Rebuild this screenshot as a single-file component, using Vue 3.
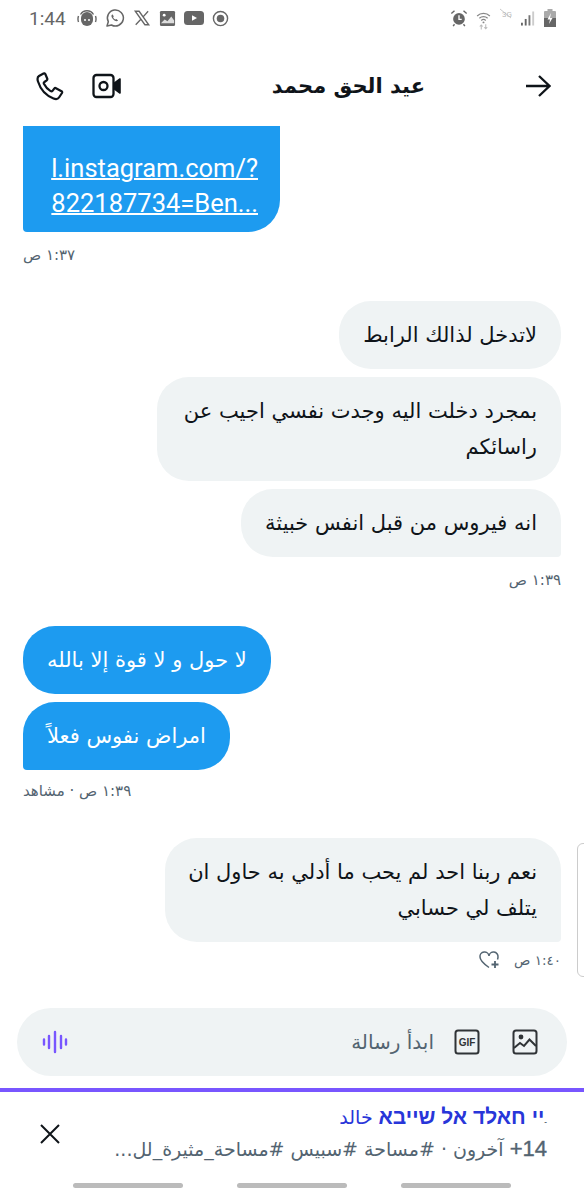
<script setup>
</script>

<template>
  <div class="phone">
    <div class="status">
      <div class="status-left">
        <span class="clock">1:44</span>
        <svg viewBox="0 0 20 20" width="20" height="20"><path d="M4 10a6 6 0 0 1 12 0v2a6 6 0 0 1-12 0z" fill="#666"/><path d="M3.500 6.500a7.500 7.500 0 0 1 13 0M1.500 14a9 9 0 0 1 0-6M18.500 14a9 9 0 0 0 0-6" fill="none" stroke="#666" stroke-width="1.400"/><circle cx="8" cy="12" r="1" fill="#fff"/><circle cx="12" cy="12" r="1" fill="#fff"/></svg>
        <svg viewBox="0 0 20 20" width="20" height="20"><path d="M2 18l1.300-4.300A8 8 0 1 1 6.500 17z" fill="none" stroke="#666" stroke-width="1.500" stroke-linejoin="round"/><path d="M7.300 6.300c-1.500 1-1 3 .8 5s3.800 2.700 5 1.200l-1.700-1.500-1 .6c-1-.5-1.800-1.300-2.300-2.400l.7-.9z" fill="#666"/></svg>
        <svg viewBox="0 0 20 20" width="18" height="18"><path d="M2.500 2.500h4.300l10.700 15h-4.300zM16.800 2.500L11 9M9 11.200l-6 6.300" fill="none" stroke="#666" stroke-width="1.500"/></svg>
        <svg viewBox="0 0 18 18" width="17" height="17"><rect x="1" y="1" width="16" height="16" rx="1.500" fill="#666"/><circle cx="5.500" cy="5.500" r="1.500" fill="#fff"/><path d="M2 14l4-4 3 2 4-5 3 4v3H2z" fill="#ddd"/></svg>
        <svg viewBox="0 0 20 16" width="20" height="16"><rect x="0" y="1" width="20" height="14" rx="3.500" fill="#666"/><path d="M8 5.300l5 2.700-5 2.700z" fill="#fff"/></svg>
        <svg viewBox="0 0 18 18" width="17" height="17"><circle cx="9" cy="9" r="7.500" fill="none" stroke="#666" stroke-width="1.500"/><circle cx="9" cy="9" r="4" fill="#666"/></svg>
      </div>
      <div class="status-right">
        <svg viewBox="0 0 20 20" width="18" height="18"><circle cx="10" cy="11" r="6.500" fill="#666"/><path d="M10 7v4.500h3" fill="none" stroke="#fff" stroke-width="1.500"/><path d="M1.500 5L5 2M18.500 5L15 2M5 17l-1.500 2M15 17l1.500 2" stroke="#666" stroke-width="1.600"/></svg>
        <svg class="wifi" viewBox="0 0 20 24" width="15" height="19"><path d="M1.500 6a12 12 0 0 1 17 0M4.500 9a8 8 0 0 1 11 0M7 12a4.500 4.500 0 0 1 6 0" fill="none" stroke="#888" stroke-width="1.600"/><circle cx="10" cy="14.500" r="1.300" fill="#888"/><path d="M7 24v-6M5 20l2-2 2 2M13 17v6M11 21l2 2 2-2" fill="none" stroke="#bbb" stroke-width="1.400"/></svg>
        <svg class="net" viewBox="0 0 14 12" width="14" height="12"><text x="3" y="9" class="net-t">3G</text><path d="M1 1l11 9" stroke="#bbb" stroke-width="0.800"/></svg>
        <svg viewBox="0 0 16 17" width="15" height="17"><rect x="0" y="13" width="2" height="3" fill="#666"/><rect x="4" y="9" width="2" height="7" fill="#666"/><rect x="8" y="5" width="2" height="11" fill="#777"/><rect x="12" y="1" width="2" height="15" fill="#ccc"/></svg>
        <svg viewBox="0 0 12 18" width="12" height="18"><rect x="3.500" y="0" width="5" height="2" fill="#aaa"/><rect x="0" y="2" width="12" height="16" rx="1" fill="#aaa"/><rect x="0" y="9" width="12" height="9" fill="#666"/><path d="M7 4L3.500 10.500H6L5 15l3.500-6H6z" fill="#fff"/></svg>
      </div>
    </div>

    <header class="head">
      <div class="head-actions">
        <svg viewBox="0 0 30 30" width="30" height="30"><path d="M8.500 2.500L4 5c-1.500 1-1.800 3-1 5.500 2.500 8 8 14 15.500 17 2.500 1 4.500.5 5.500-1l3-4.500c.4-.7.200-1.400-.5-1.800l-5.500-3c-.7-.4-1.300-.2-1.800.4l-1.700 2.200c-.5.6-1.200.7-1.900.3-2.900-1.700-5.200-4.300-6.700-7.300-.3-.7-.1-1.400.5-1.800l2.300-1.700c.6-.5.8-1.100.5-1.800L10.300 3c-.4-.7-1.100-.9-1.800-.5z" fill="none" stroke="#0f1419" stroke-width="2.200" stroke-linejoin="round"/></svg>
        <svg viewBox="0 0 30 26" width="30" height="26"><rect x="1.500" y="2" width="20" height="22" rx="3" fill="none" stroke="#0f1419" stroke-width="2.300"/><circle cx="11.500" cy="13" r="4" fill="none" stroke="#0f1419" stroke-width="2.300"/><path d="M22 10.500l6-4.500v14l-6-4.500z" fill="#0f1419" stroke="#0f1419" stroke-width="1.600" stroke-linejoin="round"/></svg>
      </div>
      <h1 class="title">عيد الحق محمد</h1>
      <svg class="back" viewBox="0 0 26 24" width="26" height="24"><path d="M1 12h23M14 2l10.500 10L14 22" fill="none" stroke="#0f1419" stroke-width="2.300"/></svg>
    </header>

    <main class="thread">
      <div class="bubble blue link-bubble">
        <a class="link">l.instagram.com/?</a>
        <a class="link">822187734=Ben...</a>
      </div>
      <div class="time left">١:٣٧ ص</div>

      <div class="group mine">
        <div class="bubble grey">لاتدخل لذالك الرابط</div>
        <div class="bubble grey wide">بمجرد دخلت اليه وجدت نفسي اجيب عن راسائكم</div>
        <div class="bubble grey last">انه فيروس من قبل انفس خبيثة</div>
      </div>
      <div class="time right">١:٣٩ ص</div>

      <div class="group theirs">
        <div class="bubble blue">لا حول و لا قوة إلا بالله</div>
        <div class="bubble blue tail">امراض نفوس فعلاً</div>
      </div>
      <div class="time left seen">١:٣٩ ص · مشاهد</div>

      <div class="group mine">
        <div class="bubble grey last wide2">نعم ربنا احد لم يحب ما أدلي به حاول ان يتلف لي حسابي</div>
      </div>
      <div class="react">
        <span>١:٤٠ ص</span>
        <svg viewBox="0 0 24 20" width="24" height="20"><path d="M11 17.500C6 14 2 11 2 7a4.500 4.500 0 0 1 9-1 4.500 4.500 0 0 1 9 1c0 1-.2 1.700-.5 2.500" fill="none" stroke="#536471" stroke-width="1.500"/><path d="M17 11v7M13.500 14.500h7" stroke="#536471" stroke-width="1.800"/></svg>
      </div>
    </main>

    <div class="composer">
      <div class="box">
        <svg viewBox="0 0 26 26" width="26" height="26"><path d="M2 10.500v5M7 7v12M13 3v20M19 7v12M24 10.500v5" stroke="#7856ff" stroke-width="2.400" stroke-linecap="round"/></svg>
        <span class="placeholder">ابدأ رسالة</span>
        <svg class="gif" viewBox="0 0 26 26" width="26" height="26"><rect x="1.500" y="1.500" width="23" height="23" rx="2.500" fill="none" stroke="#2f3336" stroke-width="2"/><text x="13" y="17" text-anchor="middle" class="gif-t">GIF</text></svg>
        <svg viewBox="0 0 26 26" width="26" height="26"><rect x="1.500" y="1.500" width="23" height="23" rx="2.500" fill="none" stroke="#2f3336" stroke-width="2"/><circle cx="9" cy="8" r="2.400" fill="#2f3336"/><path d="M2 19l6-5 4 3 5.500-6.500L24 17" fill="none" stroke="#2f3336" stroke-width="2"/></svg>
      </div>
    </div>

    <section class="space">
      <svg class="close" viewBox="0 0 20 20" width="20" height="20"><path d="M1 1l18 18M19 1L1 19" stroke="#0f1419" stroke-width="2"/></svg>
      <div class="space-text">
        <div class="space-host"><span class="dash">-</span>יי חאלד אל שייבא <span class="host-ar">خالد</span></div>
        <div class="space-sub"><b>14+</b> آخرون · #مساحة #سبيس #مساحة_مثيرة_لل...</div>
      </div>
    </section>

    <div class="navbar"><i></i><i></i><i></i></div>
    <div class="edge"></div>
  </div>
</template>

<style>
body { background: #fff; }
</style>

<style scoped>
.phone {
  position: relative;
  width: 584px;
  height: 1200px;
  overflow: hidden;
  background: #fff;
  display: flex;
  flex-direction: column;
  font-family: "DejaVu Sans", "Liberation Sans", sans-serif;
  color: #0f1419;
}
.status {
  height: 36px;
  padding: 0 28px 0 29px;
  display: flex;
  align-items: center;
  justify-content: space-between;
}
.status-left, .status-right {
  display: flex;
  align-items: center;
  gap: 8px;
}
.clock {
  font: 19px Roboto, sans-serif;
  color: #666;
  margin-right: 3px;
}
.wifi { margin-top: 4px; }
.net { margin-top: -8px; }
.net-t { font: 8px Roboto, sans-serif; fill: #bbb; }
.head {
  box-sizing: border-box;
  height: 90px;
  padding: 10px 33px 0 35px;
  display: flex;
  align-items: center;
}
.head-actions {
  display: flex;
  align-items: center;
  gap: 27px;
}
.title {
  flex: 1;
  direction: rtl;
  margin: 0 100px 0 0;
  font-size: 21px;
  font-weight: 700;
}
.thread {
  flex: 1;
  padding: 0 23px;
  display: flex;
  flex-direction: column;
}
.bubble {
  direction: rtl;
  box-sizing: border-box;
  width: fit-content;
  font-size: 21px;
  line-height: 36px;
  padding: 16px 24px;
  border-radius: 32px;
}
.blue {
  background: #1d9bf0;
  color: #fff;
}
.grey { background: #eff3f4; }
.group {
  display: flex;
  flex-direction: column;
  gap: 8px;
}
.mine { align-items: flex-end; }
.theirs { align-items: flex-start; }
.link-bubble {
  direction: ltr;
  width: 257px;
  height: 106px;
  padding: 25px 22px 0 0;
  border-radius: 0 0 32px 4px;
  display: flex;
  flex-direction: column;
  align-items: flex-end;
  font-family: Roboto, sans-serif;
  font-size: 25.5px;
  line-height: 35px;
}
.link {
  text-decoration: underline;
  text-decoration-thickness: 2px;
}
.wide { width: 404px; padding-left: 16px; }
.wide2 { width: 396px; padding-left: 16px; }
.last { border-bottom-right-radius: 4px; }
.tail { border-bottom-left-radius: 4px; }
.time {
  font-size: 15px;
  line-height: 20px;
  height: 20px;
  color: #536471;
  margin: 13px 0 36px;
}
.time.right { text-align: right; }
.time.seen { margin: 11px 0 37px; }
.react {
  display: flex;
  flex-direction: row-reverse;
  align-items: center;
  gap: 12px;
  height: 20px;
  margin-top: 8px;
  font-size: 13.5px;
  color: #536471;
}
.composer { padding: 0 17px; margin-bottom: 12px; }
.box {
  height: 68px;
  border-radius: 34px;
  background: #eff3f4;
  display: flex;
  align-items: center;
  padding: 0 29px 0 25px;
}
.placeholder {
  flex: 1;
  direction: rtl;
  font-size: 20px;
  color: #536471;
  margin-right: 20px;
}
.gif { margin-right: 32px; }
.gif-t {
  font: 700 10px "Liberation Sans", sans-serif;
  fill: #2f3336;
}
.space {
  height: 72px;
  border-top: 4px solid #7856ff;
  display: flex;
  justify-content: space-between;
  padding: 0 37px 0 40px;
}
.close { margin-top: 32px; }
.space-text {
  direction: rtl;
  padding-top: 13px;
}
.space-host {
  font-family: "Liberation Sans", "DejaVu Sans", sans-serif;
  font-size: 21px;
  line-height: 24px;
  font-weight: 700;
  color: #2836d9;
}
.host-ar { font-weight: 400; font-size: 19px; }
.dash { font-size: 8px; color: #536471; }
.space-sub {
  font-size: 19px;
  line-height: 30px;
  color: #536471;
  white-space: nowrap;
}
.space-sub b {
  font-family: "Liberation Sans", sans-serif;
  font-size: 22px;
  font-weight: 400;
  -webkit-text-stroke: 0.4px #536471;
}
.navbar {
  height: 36px;
  display: flex;
  justify-content: space-between;
  padding: 19px 73px 0;
  box-sizing: border-box;
}
.navbar i {
  width: 110px;
  height: 5px;
  border-radius: 3px;
  background: #bbb;
}
.edge {
  position: absolute;
  right: -2px;
  top: 843px;
  width: 7px;
  height: 132px;
  border: 1px solid #ccc;
  border-radius: 6px 0 0 6px;
  background: #fff;
}
</style>
